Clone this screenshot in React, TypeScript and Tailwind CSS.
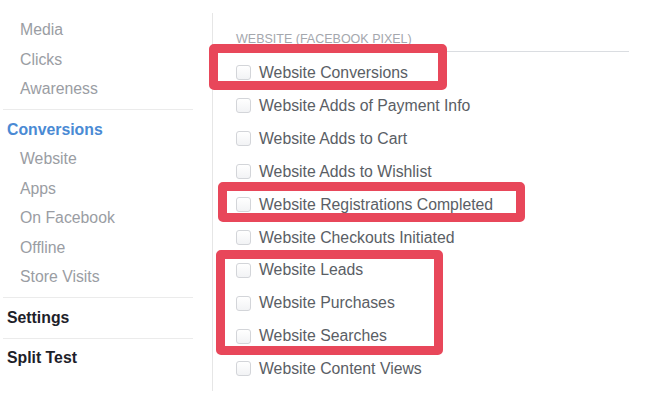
const sections: { items: string[]; title?: string; active?: boolean }[] = [
  { items: ["Media", "Clicks", "Awareness"] },
  { title: "Conversions", active: true, items: ["Website", "Apps", "On Facebook", "Offline", "Store Visits"] },
  { title: "Settings", items: [] },
  { title: "Split Test", items: [] },
];

const events = [
  "Website Conversions",
  "Website Adds of Payment Info",
  "Website Adds to Cart",
  "Website Adds to Wishlist",
  "Website Registrations Completed",
  "Website Checkouts Initiated",
  "Website Leads",
  "Website Purchases",
  "Website Searches",
  "Website Content Views",
];

function Sidebar() {
  return (
    <div className="w-[212px] shrink-0 pt-[15.5px] pl-[3px] pr-[19px]">
      {sections.map((s, i) => (
        <div key={i}>
          {i > 0 && <div className="h-px my-[5px] bg-[#ebebeb]" />}
          {s.title && (
            <div
              className={
                "h-[29.5px] flex items-center pl-[4px] font-bold " +
                (s.active ? "text-[#4a8ad4]" : "text-[#1d2129]")
              }
            >
              {s.title}
            </div>
          )}
          {s.items.map((it) => (
            <div key={it} className="h-[29.5px] flex items-center pl-[17px] text-[#9a9da3]">
              {it}
            </div>
          ))}
        </div>
      ))}
    </div>
  );
}

function Checkbox() {
  return (
    <span className="w-[15px] h-[15px] rounded-[3px] border border-[#d3d5d9] bg-gradient-to-b from-white to-[#f2f3f5] shrink-0" />
  );
}

export default function App() {
  return (
    <div
      className="relative w-[653px] h-[407px] bg-white overflow-hidden text-[15.8px]"
      style={{ fontFamily: '"Liberation Sans", Arial, sans-serif' }}
    >
      <div className="flex items-start">
        <Sidebar />
        <div className="mt-[13px] h-[378px] border-l border-[#e6e6e6] pl-[23px] pt-[19px]">
          <div className="w-[393px] pb-[4px] border-b border-[#dadde1] text-[12.5px] leading-[15px] text-[#a4a7ad]">
            WEBSITE (FACEBOOK PIXEL)
          </div>
          <div className="mt-[4.5px]">
            {events.map((e) => (
              <div key={e} className="h-[32.9px] flex items-center gap-[8px] text-[#5a5e65]">
                <Checkbox />
                <span>{e}</span>
              </div>
            ))}
          </div>
        </div>
      </div>

      {/* highlight boxes drawn over the list */}
      <div className="absolute left-[209px] top-[44px] w-[238px] h-[46px] border-[9px] border-[#e8475a] rounded-[5px]" />
      <div className="absolute left-[218px] top-[182px] w-[307px] h-[40px] border-[9px] border-[#e8475a] rounded-[5px]" />
      <div className="absolute left-[216px] top-[250px] w-[227px] h-[105px] border-[9px] border-[#e8475a] rounded-[5px]" />
    </div>
  );
}
